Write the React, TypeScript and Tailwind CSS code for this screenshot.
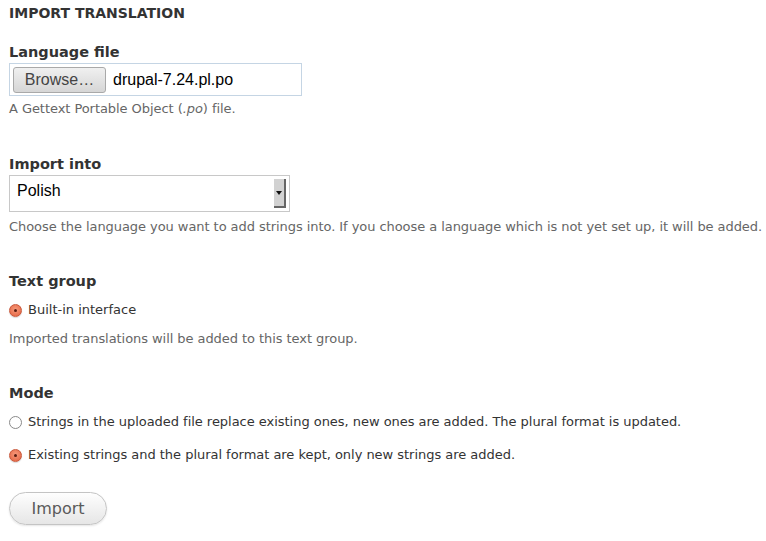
const dejavu = "font-['DejaVu_Sans',sans-serif]"

function Radio({ checked }: { checked?: boolean }) {
  return checked ? (
    <span className="flex h-[13px] w-[13px] shrink-0 items-center justify-center rounded-full border border-[#c9573a] bg-[radial-gradient(circle_at_50%_40%,#f79a7c,#e2603d)] shadow-[0_1px_1px_rgba(0,0,0,0.15)]">
      <span className="h-[3px] w-[3px] rounded-full bg-[#5a1d10]" />
    </span>
  ) : (
    <span className="h-[13px] w-[13px] shrink-0 rounded-full border border-[#8a8a8a] bg-white" />
  )
}

function Label({ children }: { children: React.ReactNode }) {
  return <div className={`text-[14.5px] font-bold leading-[18px] text-[#333] ${dejavu}`}>{children}</div>
}

function Desc({ children }: { children: React.ReactNode }) {
  return <div className={`whitespace-nowrap text-[13px] leading-[16px] tracking-[-0.06px] text-[#666] ${dejavu}`}>{children}</div>
}

export default function App() {
  return (
    <div className={`min-h-[541px] w-[766px] bg-white px-[9px] pt-[5px] ${dejavu}`}>
      <div className="text-[14px] font-bold leading-[16px] text-[#333]">IMPORT TRANSLATION</div>

      <div className="mt-[22px]">
        <Label>Language file</Label>
        <div className="mt-[2px] flex h-[33px] w-[293px] items-center border border-[#c5d5e4] bg-white pl-[3px]">
          <div className="flex h-[26px] w-[93px] items-center justify-center rounded-[3px] border border-[#a9a9a9] bg-gradient-to-b from-[#f0f0f0] to-[#d6d6d6] font-['Liberation_Sans',sans-serif] text-[16px] text-[#444]">
            Browse…
          </div>
          <span className="ml-[7px] font-['Liberation_Sans',sans-serif] text-[16px] text-black">drupal-7.24.pl.po</span>
        </div>
        <div className="mt-[5px]">
          <Desc>
            A Gettext Portable Object (<em>.po</em>) file.
          </Desc>
        </div>
      </div>

      <div className="mt-[38px]">
        <Label>Import into</Label>
        <div className="mt-[2px] flex h-[37px] w-[281px] items-start border border-[#c8c8c8] bg-white">
          <span className="ml-[7px] mt-[3px] font-['Liberation_Sans',sans-serif] text-[16px] text-black">Polish</span>
          <div className="ml-auto mr-[3px] mt-[3px] flex h-[29px] w-[12px] items-center justify-center border-b-[2px] border-r-[2px] border-b-[#666] border-r-[#666] bg-[#d2d2d2]">
            <svg width="6" height="4" viewBox="0 0 6 4">
              <path d="M0 0h6L3 4z" fill="#111" />
            </svg>
          </div>
        </div>
        <div className="mt-[7px]">
          <Desc>
            Choose the language you want to add strings into. If you choose a language which is not yet set up, it will be added.
          </Desc>
        </div>
      </div>

      <div className="mt-[37px]">
        <Label>Text group</Label>
        <div className="mt-[12px] flex items-center gap-[6px]">
          <Radio checked />
          <span className="text-[13px] leading-[16px] text-[#333]">Built-in interface</span>
        </div>
        <div className="mt-[13px]">
          <Desc>Imported translations will be added to this text group.</Desc>
        </div>
      </div>

      <div className="mt-[37px]">
        <Label>Mode</Label>
        <div className="mt-[12px] flex items-center gap-[6px]">
          <Radio />
          <span className="text-[13px] leading-[16px] tracking-[-0.03px] text-[#333]">
            Strings in the uploaded file replace existing ones, new ones are added. The plural format is updated.
          </span>
        </div>
        <div className="mt-[17px] flex items-center gap-[6px]">
          <Radio checked />
          <span className="text-[13px] leading-[16px] tracking-[-0.03px] text-[#333]">
            Existing strings and the plural format are kept, only new strings are added.
          </span>
        </div>
      </div>

      <button className="mt-[29px] flex h-[33px] w-[98px] items-center justify-center rounded-full border border-[#c4c4c4] bg-gradient-to-b from-[#fefefe] to-[#e6e6e6] text-[16px] text-[#5a5a5a] shadow-[0_1px_2px_rgba(0,0,0,0.1)]">
        Import
      </button>
    </div>
  )
}
